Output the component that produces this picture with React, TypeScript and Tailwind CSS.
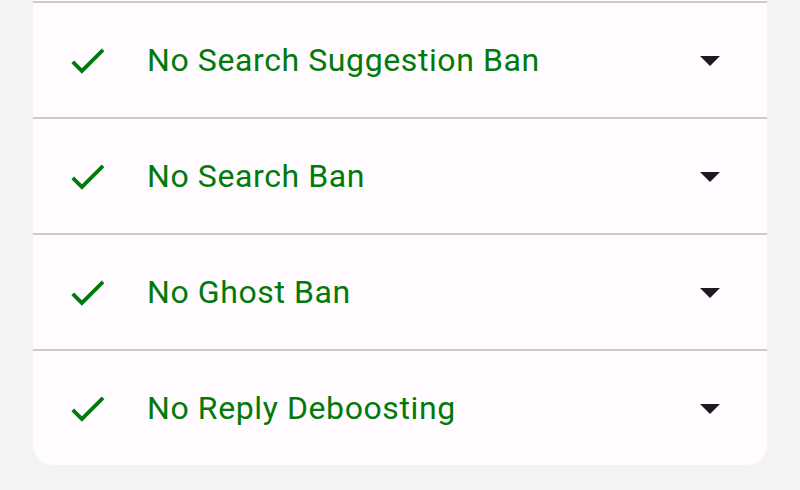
const rows = [
  "No Search Suggestion Ban",
  "No Search Ban",
  "No Ghost Ban",
  "No Reply Deboosting",
];

function CheckIcon() {
  return (
    <svg width="45" height="45" viewBox="0 0 24 24" fill="#007a0a">
      <path d="M9 16.17L4.83 12l-1.42 1.41L9 19 21 7l-1.41-1.41z" />
    </svg>
  );
}

function ArrowDropDown() {
  return (
    <svg width="48" height="48" viewBox="0 0 24 24" fill="#1c1b1f">
      <path d="M7 10l5 5 5-5z" />
    </svg>
  );
}

export default function App() {
  return (
    <div
      className="w-[800px] h-[490px] bg-[#f1f3f4] overflow-hidden"
      style={{ fontFamily: "Roboto, 'Noto Sans', sans-serif" }}
    >
      <div className="mx-[33px] pt-px bg-[#fffbfe] rounded-b-[20px] overflow-hidden">
        {rows.map((label) => (
          <div
            key={label}
            className="h-[116px] border-t-2 border-[#cbc9cc] flex items-center pl-[32px] pr-[33px]"
          >
            <CheckIcon />
            <span className="ml-[37px] flex-1 text-[32px] tracking-[0.6px] leading-none text-[#007a0a]">
              {label}
            </span>
            <ArrowDropDown />
          </div>
        ))}
      </div>
    </div>
  );
}
